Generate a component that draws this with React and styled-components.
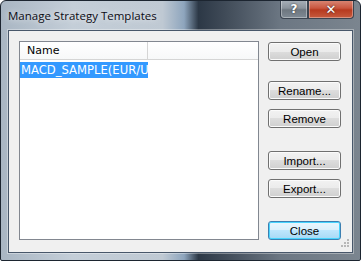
import styled, { createGlobalStyle } from "styled-components";

const GlobalStyle = createGlobalStyle`
  html, body {
    margin: 0;
    padding: 0;
    background: #ffffff;
  }
`;

const Window = styled.div`
  width: 361px;
  height: 261px;
  box-sizing: border-box;
  display: flex;
  flex-direction: column;
  border: 1px solid #1c2530;
  border-radius: 6px 6px 2px 2px;
  background: linear-gradient(
    90deg,
    #a9b6c3 0%,
    #c4ced8 20%,
    #bfc9d3 45%,
    #8ea5bd 51%,
    #2c3846 55%,
    #3f4a57 62%,
    #6c7783 78%,
    #7b858f 100%
  );
  overflow: hidden;
`;

const TitleBar = styled.div`
  height: 29px;
  display: flex;
  align-items: flex-start;
  padding-left: 7px;
  padding-right: 6px;
`;

const Title = styled.div`
  flex: 1;
  margin-top: 7px;
  font-family: "Open Sans", "Noto Sans", sans-serif;
  font-size: 11.5px;
  color: #0b0b14;
  text-shadow: 0 0 6px rgba(255, 255, 255, 0.9);
`;

const CaptionButtons = styled.div`
  display: flex;
  margin-top: -1px;
`;

const CaptionButton = styled.div`
  width: ${(p) => p.w}px;
  height: 19px;
  box-sizing: border-box;
  display: flex;
  align-items: center;
  justify-content: center;
  border: 1px solid #3b4450;
  border-top: none;
  border-radius: ${(p) => p.radius};
  color: #ffffff;
  font-family: "DejaVu Sans", sans-serif;
  font-weight: bold;
  font-size: ${(p) => (p.close ? 13 : 12)}px;
  text-shadow: 0 0 2px #222;
  box-shadow: inset 0 0 0 1px rgba(255, 255, 255, 0.35);
  background: ${(p) =>
    p.close
      ? "linear-gradient(180deg, #d98a78 0%, #c9563f 45%, #b73a1f 55%, #c65a3d 100%)"
      : "linear-gradient(180deg, #a9b1ba 0%, #8b949d 45%, #6e7780 55%, #7f8a94 100%)"};
`;

const Client = styled.div`
  flex: 1;
  margin: 0 7px 7px 7px;
  background: #f0f0f0;
  border: 1px solid #48576a;
  box-shadow: 0 0 0 1px rgba(255, 255, 255, 0.35);
  display: flex;
  padding: 10px 11px 12px 10px;
  gap: 9px;
  position: relative;
`;

const ListBox = styled.div`
  width: 240px;
  box-sizing: border-box;
  border: 1px solid #828790;
  background: #ffffff;
  display: flex;
  flex-direction: column;
`;

const Header = styled.div`
  display: flex;
  height: 18px;
  box-sizing: border-box;
  border-bottom: 1px solid #d5d5d5;
  background: linear-gradient(180deg, #ffffff 0%, #f7f8f9 100%);
`;

const HeaderCell = styled.div`
  width: ${(p) => p.w}px;
  box-sizing: border-box;
  border-right: 1px solid #d5d5d5;
  padding-left: 7px;
  padding-top: 2px;
  font-family: "DejaVu Sans", sans-serif;
  font-size: 11px;
  color: #000000;
`;

const Row = styled.div`
  width: 128px;
  height: 16px;
  margin-top: 2px;
  box-sizing: border-box;
  padding-left: 1px;
  background: ${(p) => (p.selected ? "#3399ff" : "transparent")};
  color: ${(p) => (p.selected ? "#ffffff" : "#000000")};
  font-family: "DejaVu Sans", sans-serif;
  font-size: 11.6px;
  line-height: 16px;
  white-space: nowrap;
  overflow: hidden;
`;

const ButtonColumn = styled.div`
  width: 73px;
  display: flex;
  flex-direction: column;
  padding-top: 1px;
`;

const Button = styled.div`
  height: 19px;
  box-sizing: border-box;
  margin-top: ${(p) => p.mt || 0}px;
  display: flex;
  align-items: center;
  justify-content: center;
  border: 1px solid ${(p) => (p.primary ? "#3c7fb1" : "#707070")};
  border-radius: 3px;
  font-family: "Liberation Sans", sans-serif;
  font-size: 11.5px;
  color: #000000;
  box-shadow: inset 0 0 0 1px ${(p) => (p.primary ? "#48d4fe" : "#fbfbfb")};
  background: ${(p) =>
    p.primary
      ? "linear-gradient(180deg, #eaf6fd 0%, #d9f0fc 50%, #bee6fd 50%, #a7d9f5 100%)"
      : "linear-gradient(180deg, #f2f2f2 0%, #ebebeb 50%, #dddddd 50%, #cfcfcf 100%)"};
`;

const Grip = styled.svg`
  position: absolute;
  right: 2px;
  bottom: 2px;
`;

const buttons = [
  { label: "Open", mt: 0 },
  { label: "Rename...", mt: 20 },
  { label: "Remove", mt: 9 },
  { label: "Import...", mt: 23 },
  { label: "Export...", mt: 9 },
  { label: "Close", mt: 23, primary: true },
];

const App = () => {
  return (
    <>
      <GlobalStyle />
      <Window>
        <TitleBar>
          <Title>Manage Strategy Templates</Title>
          <CaptionButtons>
            <CaptionButton w={28} radius="0 0 0 4px">
              ?
            </CaptionButton>
            <CaptionButton w={46} radius="0 0 4px 0" close>
              ✕
            </CaptionButton>
          </CaptionButtons>
        </TitleBar>
        <Client>
          <ListBox>
            <Header>
              <HeaderCell w={128}>Name</HeaderCell>
            </Header>
            <Row selected>MACD_SAMPLE(EUR/USD)</Row>
          </ListBox>
          <ButtonColumn>
            {buttons.map((b) => (
              <Button key={b.label} mt={b.mt} primary={b.primary}>
                {b.label}
              </Button>
            ))}
          </ButtonColumn>
          <Grip width="12" height="12" viewBox="0 0 12 12">
            {[
              [9, 1],
              [6, 4],
              [9, 4],
              [3, 7],
              [6, 7],
              [9, 7],
            ].map(([x, y]) => (
              <rect key={`${x}-${y}`} x={x} y={y} width="2" height="2" fill="#b8b8b8" />
            ))}
          </Grip>
        </Client>
      </Window>
    </>
  );
};

export default App;
